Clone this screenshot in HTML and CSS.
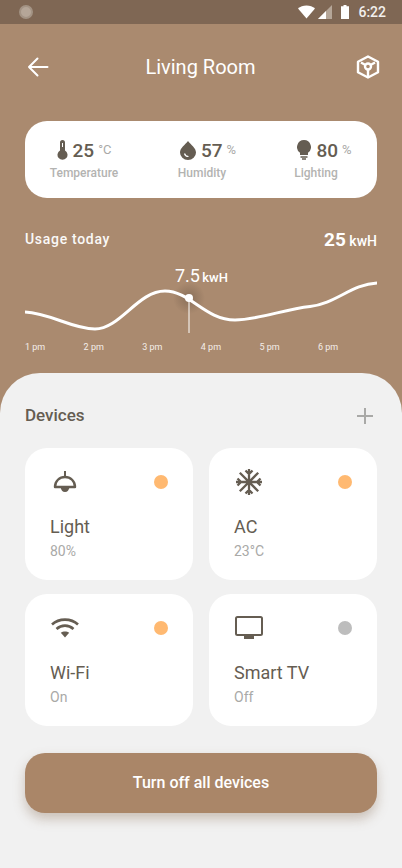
FILE: index.html
```html
<!DOCTYPE html>
<html lang="en">
<head>
    <meta charset="UTF-8">
    <meta name="viewport" content="width=device-width, initial-scale=1.0">
    <title>Living Room</title>
    <link rel="stylesheet" href="styles.css">
</head>
<body>
    <div class="status-bar">
        <span class="status-dot"></span>
        <div class="status-right">
            <svg width="17" height="14" viewBox="0 0 17 14"><path d="M0 3.6C2.2 1.5 5.2 0.4 8.5 0.4S14.8 1.5 17 3.6L8.5 13.6Z" fill="#fff"/></svg>
            <svg class="signal" width="14" height="14" viewBox="0 0 14 14"><path d="M0 14L14 0V14Z" fill="#b5a698"/><path d="M0 14L8 6V14Z" fill="#fff"/></svg>
            <svg class="battery" width="8" height="14" viewBox="0 0 8 14"><path d="M2.5 0H5.5V1.3H8V14H0V1.3H2.5Z" fill="#fff"/></svg>
            <span class="status-time">6:22</span>
        </div>
    </div>

    <header class="hero">
        <div class="topbar">
            <svg width="24" height="24" viewBox="0 0 24 24" fill="none" stroke="#fff" stroke-width="2" stroke-linecap="round" stroke-linejoin="round"><path d="M3 12H21.500M11.500 3.500L3 12L11.500 20.500"/></svg>
            <h1>Living Room</h1>
            <svg width="24" height="24" viewBox="0 0 24 24" fill="none" stroke="#fff" stroke-width="2.400" stroke-linejoin="round"><path d="M12 1.500L22 6.800V17.200L12 22.500L2 17.200V6.800Z"/><circle cx="12" cy="11.500" r="3"/><path d="M12 14.500V22M9.400 10L5 7.500M14.600 10L19 7.500"/></svg>
        </div>

        <section class="stats">
            <div class="stat">
                <div class="stat-value">
                    <svg width="11" height="20" viewBox="0 0 11 20"><path d="M3 2.500a2.500 2.500 0 0 1 5 0V10.500a5 5 0 1 1-5 0Z" fill="#655d52"/><path d="M5.500 3V7" stroke="#fff" stroke-width="1"/></svg>
                    <b>25</b><span class="unit">°C</span>
                </div>
                <div class="stat-label">Temperature</div>
            </div>
            <div class="stat stat-humidity">
                <div class="stat-value">
                    <svg width="16" height="20" viewBox="0 0 16 20"><path d="M8 1C11 5 16 8 16 12.500A8 7.500 0 0 1 0 12.500C0 8 5 5 8 1Z" fill="#655d52"/><path d="M4.500 13.500C5 15.500 6.500 16.500 8.500 16.500" stroke="#fff" stroke-width="1.200" fill="none"/></svg>
                    <b>57</b><span class="unit">%</span>
                </div>
                <div class="stat-label">Humidity</div>
            </div>
            <div class="stat stat-lighting">
                <div class="stat-value">
                    <svg width="14" height="20" viewBox="0 0 14 20"><path d="M7 0A7 7 0 0 1 11 12.700V15H3V12.700A7 7 0 0 1 7 0Z" fill="#655d52"/><path d="M3.500 17H10.500M5 19H9" stroke="#655d52" stroke-width="1.300"/></svg>
                    <b>80</b><span class="unit">%</span>
                </div>
                <div class="stat-label">Lighting</div>
            </div>
        </section>

        <div class="usage-row">
            <span class="usage-title">Usage today</span>
            <span class="usage-total"><b>25</b> kwH</span>
        </div>

        <div class="chart">
            <div class="chart-tip"><b>7.5</b> kwH</div>
            <svg width="402" height="70" viewBox="0 0 402 70" fill="none">
                <defs>
                    <radialGradient id="glow"><stop offset="0" stop-color="#6f5a48" stop-opacity=".55"/><stop offset="1" stop-color="#6f5a48" stop-opacity="0"/></radialGradient>
                </defs>
                <circle cx="189" cy="29" r="16" fill="url(#glow)"/>
                <path d="M25 43C50 44 72 60 95 60C120 60 138 22 165 22C190 22 205 51 235 51C258 51 285 40 310 37.500C335 35 352 15 377 14" stroke="#fff" stroke-width="3"/>
                <path d="M189 29V64" stroke="#fff" stroke-width="1"/>
                <circle cx="189" cy="29" r="4" fill="#fff"/>
            </svg>
            <div class="chart-hours">
                <span>1 pm</span><span>2 pm</span><span>3 pm</span><span>4 pm</span><span>5 pm</span><span>6 pm</span>
            </div>
        </div>
    </header>

    <main class="sheet">
        <div class="sheet-head">
            <h2>Devices</h2>
            <svg width="16" height="16" viewBox="0 0 16 16"><path d="M8 0V16M0 8H16" stroke="#a9a9a7" stroke-width="2"/></svg>
        </div>

        <div class="devices">
            <div class="device">
                <div class="device-top">
                    <svg width="27" height="24" viewBox="-3 0 27 24" fill="none"><path d="M12 1V6" stroke="#655d52" stroke-width="2"/><path d="M2 17C2 11 6.500 7 12 7S22 11 22 17Z" stroke="#655d52" stroke-width="2.400" stroke-linejoin="round"/><path d="M7.500 17H16.500C16 20 14.500 22 12 22S8 20 7.500 17Z" fill="#655d52"/></svg>
                    <span class="led"></span>
                </div>
                <div class="device-name">Light</div>
                <div class="device-state">80%</div>
            </div>
            <div class="device">
                <div class="device-top">
                    <svg width="28" height="26" viewBox="-2 0 28 26" fill="none" stroke="#655d52" stroke-width="2.300"><path d="M13 0V26M0 13H26M3.800 3.800L22.200 22.200M22.200 3.800L3.800 22.200M9.500 1.500L13 5L16.500 1.500M9.500 24.500L13 21L16.500 24.500M1.500 9.500L5 13L1.500 16.500M24.500 9.500L21 13L24.500 16.500"/></svg>
                    <span class="led"></span>
                </div>
                <div class="device-name">AC</div>
                <div class="device-state">23°C</div>
            </div>
            <div class="device">
                <div class="device-top">
                    <svg width="29" height="20" viewBox="-1 0 29 20" fill="none" stroke="#655d52" stroke-width="2.600"><path d="M1 6.500C8 0 20 0 27 6.500M5.500 11C10.500 6.500 17.500 6.500 22.500 11"/><path d="M9.800 14.800C12 13 16 13 18.200 14.800L14 19.500Z" fill="#655d52" stroke="none"/></svg>
                    <span class="led"></span>
                </div>
                <div class="device-name">Wi-Fi</div>
                <div class="device-state">On</div>
            </div>
            <div class="device">
                <div class="device-top">
                    <svg width="29" height="24" viewBox="-1 0 29 24" fill="none"><rect x="1" y="1" width="26" height="18" rx="1.500" stroke="#655d52" stroke-width="2"/><path d="M9 20H19V23H9Z" fill="#655d52"/></svg>
                    <span class="led led-off"></span>
                </div>
                <div class="device-name">Smart TV</div>
                <div class="device-state">Off</div>
            </div>
        </div>

        <button class="turn-off">Turn off all devices</button>
    </main>
</body>
</html>
```

FILE: styles.css
```css
* {
    box-sizing: border-box;
}
body {
    margin: 0;
    width: 402px;
    height: 868px;
    overflow: hidden;
    background-color: #aa8a6f;
    font-family: Roboto, "Liberation Sans", sans-serif;
    color: #655d52;
}
svg {
    display: block;
    flex: none;
}

.status-bar {
    height: 24px;
    background-color: #7f6754;
    display: flex;
    align-items: center;
    justify-content: space-between;
    padding: 0 16px 0 19px;
}
.status-dot {
    width: 14px;
    height: 14px;
    border-radius: 50%;
    background-color: #b5a698;
    border: 2px solid #a39384;
}
.status-right {
    display: flex;
    align-items: center;
}
.signal {
    margin-left: 3px;
}
.battery {
    margin-left: 9px;
}
.status-time {
    margin-left: 9px;
    color: #fff;
    font-size: 14px;
    font-weight: 500;
    opacity: .9;
}

.hero {
    height: 349px;
    padding-top: 24px;
}
.topbar {
    display: flex;
    align-items: center;
    justify-content: space-between;
    height: 38px;
    padding: 0 22px 0 26px;
}
.topbar h1 {
    margin: 0;
    color: #fff;
    font-size: 20px;
    font-weight: 400;
    padding-right: 5px;
}

.stats {
    margin: 35px 25px 0;
    height: 77px;
    background-color: #fff;
    border-radius: 22px;
    display: grid;
    grid-template-columns: 118px 114px 100px;
    padding: 16px 0 0 9px;
}
.stat {
    display: flex;
    flex-direction: column;
    align-items: center;
    width: 100px;
}
.stat-value {
    display: flex;
    align-items: center;
    height: 26px;
    gap: 5px;
}
.stat-humidity .stat-value {
    margin-left: 12px;
}
.stat-lighting .stat-value {
    margin-left: 17px;
}
.stat-value b {
    font-size: 19px;
    font-weight: 500;
}
.unit {
    font-size: 13px;
    color: #a9a9a7;
    margin-left: -1px;
    position: relative;
    top: -1px;
}
.stat-label {
    font-size: 12px;
    font-weight: 500;
    color: #b3b3b1;
    margin-top: 3px;
}

.usage-row {
    display: flex;
    justify-content: space-between;
    align-items: center;
    margin-top: 30px;
    padding: 0 25px;
    color: #fff;
    height: 22px;
}
.usage-title {
    font-size: 14px;
    font-weight: 500;
    letter-spacing: .7px;
    opacity: .95;
}
.usage-total {
    font-size: 14px;
    font-weight: 500;
}
.usage-total b {
    font-size: 19px;
    font-weight: 700;
}

.chart {
    position: relative;
    margin-top: 18px;
    padding-top: 1px;
}
.chart-tip {
    position: absolute;
    left: 175px;
    top: -3px;
    color: #fff;
    font-size: 13px;
    font-weight: 500;
    word-spacing: -1px;
}
.chart-tip b {
    font-size: 18px;
    font-weight: 400;
}
.chart-hours {
    display: flex;
    justify-content: flex-start;
    padding-left: 25px;
    color: #f4eee9;
    font-size: 9px;
    margin-top: 3px;
}
.chart-hours span {
    width: 58.600px;
}

.sheet {
    height: 495px;
    background-color: #f1f1f1;
    border-radius: 40px 40px 0 0;
    padding: 0 25px;
}
.sheet-head {
    height: 75px;
    display: flex;
    align-items: center;
    justify-content: space-between;
    padding: 10px 4px 0 0;
}
.sheet-head h2 {
    margin: 0 0 2px;
    font-size: 17px;
    font-weight: 500;
}

.devices {
    display: grid;
    grid-template-columns: 168px 168px;
    grid-auto-rows: 132px;
    gap: 14px 16px;
}
.device {
    background-color: #fff;
    border-radius: 22px;
    padding: 19px 25px 0;
}
.device-top {
    height: 30px;
    display: flex;
    align-items: center;
    justify-content: space-between;
}
.led {
    width: 14px;
    height: 14px;
    border-radius: 50%;
    background-color: #ffb971;
}
.led-off {
    background-color: #bdbdbd;
}
.device-name {
    font-size: 18px;
    font-weight: 450;
    margin-top: 19px;
}
.device-state {
    font-size: 14px;
    color: #a9a9a7;
    margin-top: 6px;
}

.turn-off {
    display: block;
    width: 100%;
    height: 60px;
    margin-top: 27px;
    padding-bottom: 3px;
    border: 0;
    border-radius: 20px;
    background-color: #aa8668;
    color: #fff;
    font-family: inherit;
    font-size: 16px;
    font-weight: 500;
    box-shadow: 0 6px 12px rgba(130, 100, 75, .35);
}
```
